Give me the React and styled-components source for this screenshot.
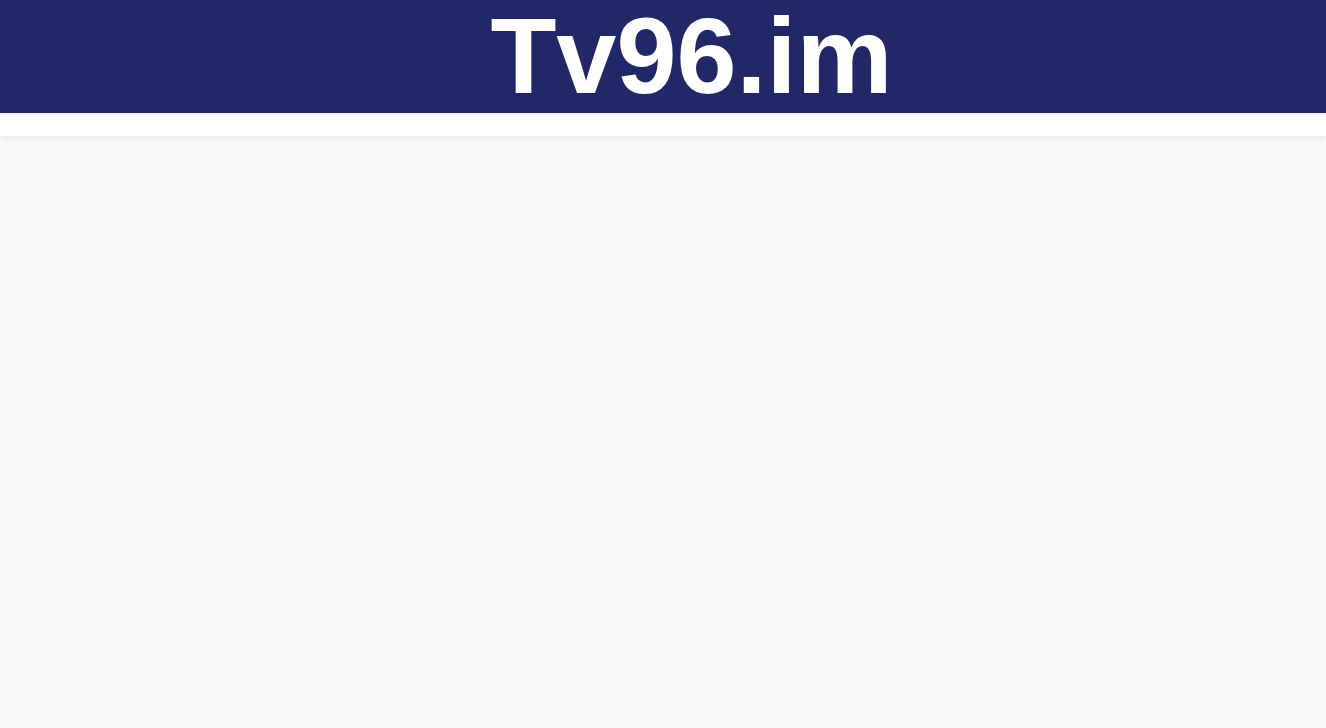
import React from 'react';
import styled, { createGlobalStyle } from 'styled-components';

const GlobalStyle = createGlobalStyle`
  html, body {
    margin: 0;
    padding: 0;
    background: #f8f9fa;
    font-family: "Liberation Sans", Arial, Helvetica, sans-serif;
  }
`;

const Header = styled.header`
  background: #212767;
  height: 113px;
  display: flex;
  justify-content: center;
  align-items: flex-start;
  padding-left: 57px;
`;

const Logo = styled.h1`
  margin: 0;
  color: #fff;
  font-size: 108px;
  font-weight: 700;
  line-height: 111px;
`;

const NavBar = styled.nav`
  height: 21px;
  background: #fff;
  border-top: 2px solid #f1f3f6;
  box-shadow: 0 2px 6px rgba(0, 0, 0, 0.08);
`;

const Main = styled.main`
  min-height: 592px;
`;

export default function App() {
  return (
    <>
      <GlobalStyle />
      <Header>
        <Logo>Tv96.im</Logo>
      </Header>
      <NavBar />
      <Main />
    </>
  );
}
